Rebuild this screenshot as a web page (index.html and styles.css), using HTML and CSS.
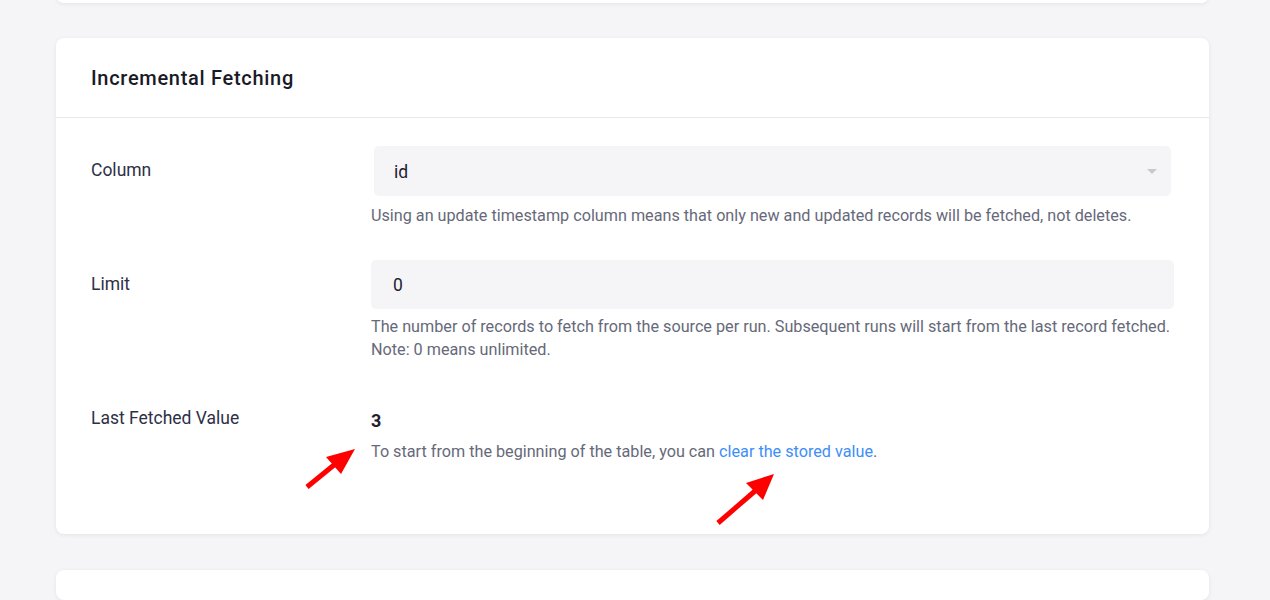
FILE: index.html
```html
<!DOCTYPE html>
<html lang="en">
<head>
<meta charset="utf-8">
<title>Incremental Fetching</title>
<link rel="stylesheet" href="styles.css">
</head>
<body>
<div class="page">
  <div class="card card-top"></div>

  <section class="card">
    <header class="card-header">
      <h2 class="card-title">Incremental Fetching</h2>
    </header>
    <div class="card-body">
      <div class="row">
        <label class="row-label">Column</label>
        <div class="row-control">
          <div class="select">
            <span class="select-value">id</span>
            <span class="caret"></span>
          </div>
          <p class="help help-select">Using an update timestamp column means that only new and updated records will be fetched, not deletes.</p>
        </div>
      </div>

      <div class="row">
        <label class="row-label">Limit</label>
        <div class="row-control">
          <div class="input">0</div>
          <p class="help help-input">The number of records to fetch from the source per run. Subsequent runs will start from the last record fetched.<br>Note: 0 means unlimited.</p>
        </div>
      </div>

      <div class="row">
        <label class="row-label">Last Fetched Value</label>
        <div class="row-control control-static">
          <div class="static-value">3</div>
          <p class="help help-static">To start from the beginning of the table, you can <a class="link" href="#">clear the stored value</a>.</p>
        </div>
      </div>
    </div>
  </section>

  <div class="card card-bottom"></div>
</div>

<svg class="annotations" width="1270" height="600" viewBox="0 0 1270 600" xmlns="http://www.w3.org/2000/svg">
  <line x1="307" y1="487" x2="334" y2="465" stroke="#ff0000" stroke-width="5"/>
  <polygon points="355,449 326,457 341,474" fill="#ff0000"/>
  <line x1="718" y1="523" x2="755" y2="491" stroke="#ff0000" stroke-width="5"/>
  <polygon points="774,474 746,483 763,500" fill="#ff0000"/>
</svg>
</body>
</html>
```

FILE: styles.css
```css
html, body {
  margin: 0;
  padding: 0;
}

body {
  background: #f5f5f7;
  font-family: Roboto, "Noto Sans", "Liberation Sans", sans-serif;
  color: #2e3047;
  height: 600px;
  overflow: hidden;
  position: relative;
}

.page {
  width: 1153px;
  margin-left: 56px;
}

.card {
  background: #ffffff;
  border-radius: 8px;
  box-shadow: 0 1px 4px rgba(30, 40, 80, 0.08);
}

.card-top {
  height: 23px;
  margin-top: -20px;
  margin-bottom: 35px;
}

.card-bottom {
  height: 30px;
  margin-top: 36px;
}

.card-header {
  height: 79px;
  padding: 0 35px;
  display: flex;
  align-items: center;
  border-bottom: 1px solid #e6e8ef;
}

.card-title {
  margin: 0;
  padding-top: 1px;
  font-size: 20px;
  font-weight: 500;
  letter-spacing: 0.7px;
  color: #1a1a26;
}

.card-body {
  padding: 28px 35px 71px;
  display: flex;
  flex-direction: column;
  gap: 33px;
}

.row {
  display: grid;
  grid-template-columns: 280px 1fr;
}

.row-label {
  font-size: 17.5px;
  line-height: 23px;
  padding-top: 13px;
  color: #2e3047;
}

.row-control {
  min-width: 0;
}

.select {
  margin: 0 3px;
  height: 50px;
  background: #f5f5f7;
  border-radius: 5px;
  display: flex;
  align-items: center;
  justify-content: space-between;
  padding: 1px 14px 0 20px;
  box-sizing: border-box;
}

.select-value,
.input {
  font-size: 17.5px;
  color: #1f2030;
}

.caret {
  width: 0;
  height: 0;
  border-left: 5px solid transparent;
  border-right: 5px solid transparent;
  border-top: 5px solid #c9c9cd;
}

.input {
  height: 49px;
  background: #f5f5f7;
  border-radius: 5px;
  display: flex;
  align-items: center;
  padding: 0 22px;
  box-sizing: border-box;
}

.help {
  margin: 0;
  font-size: 16.2px;
  line-height: 23px;
  color: #666979;
}

.help-select {
  margin-top: 8px;
}

.help-input {
  margin-top: 6px;
}

.control-static {
  padding-top: 15px;
}

.static-value {
  font-size: 18px;
  font-weight: 700;
  line-height: 23px;
  color: #1f2030;
}

.help-static {
  margin-top: 8px;
}

.link {
  color: #3d8ef8;
  text-decoration: none;
}

.annotations {
  position: absolute;
  top: 0;
  left: 0;
  pointer-events: none;
}
```
